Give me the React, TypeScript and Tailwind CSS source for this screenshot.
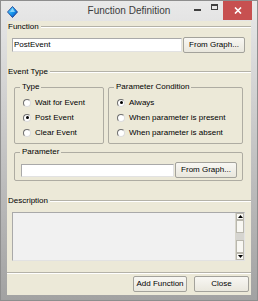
import React from 'react';

const font = "font-['Liberation_Sans',Arial,sans-serif]";

function Radio({ label, checked }: { label: string; checked?: boolean }) {
  return (
    <div className="flex items-center h-[15px] gap-[4px]">
      <span className="w-[8px] h-[8px] rounded-full bg-white border border-t-[#6f6f6f] border-l-[#6f6f6f] border-r-[#dcdcdc] border-b-[#dcdcdc] flex items-center justify-center shrink-0">
        {checked && <span className="w-[3px] h-[3px] rounded-full bg-black" />}
      </span>
      <span className="leading-none">{label}</span>
    </div>
  );
}

function Header({ label }: { label: string }) {
  return (
    <div className="flex items-center h-[12px] pl-[1px]">
      <span className="leading-none pr-[2px]">{label}</span>
      <div className="flex-1 border-t border-t-[#b4b2a8] border-b border-b-white" />
    </div>
  );
}

function Button({ label, className = '' }: { label: string; className?: string }) {
  return (
    <div
      className={`h-[16px] flex items-center justify-center rounded-[2px] border border-[#a3a29b] bg-gradient-to-b from-[#f8f7f3] to-[#e9e7dd] leading-none ${className}`}
    >
      {label}
    </div>
  );
}

export default function App() {
  return (
    <div className={`w-[258px] h-[301px] flex flex-col bg-gradient-to-b from-[#e9e9e9] via-[#c4c4c4] to-[#a2a2a2] border border-[#8e8e8e] text-[8px] text-black ${font}`}>
      {/* Title bar */}
      <div className="h-[20px] grid grid-cols-[1fr_auto_1fr] items-start shrink-0">
        <div className="pl-[6px] pt-[5px]">
          <svg width="11" height="12" viewBox="0 0 11 12">
            <defs>
              <linearGradient id="dia" x1="0" y1="0" x2="1" y2="1">
                <stop offset="0" stopColor="#7fe3ff" />
                <stop offset="0.5" stopColor="#1a9cf0" />
                <stop offset="1" stopColor="#0a3fb0" />
              </linearGradient>
            </defs>
            <polygon points="5.5,0.5 10.5,6 5.5,11.5 0.5,6" fill="url(#dia)" stroke="#0b2f8a" strokeWidth="0.8" />
            <polygon points="5.5,2 8,6 5.5,6 3,6" fill="#c8f4ff" opacity="0.6" />
          </svg>
        </div>
        <div className="text-[10px] text-[#3c3c3c] leading-none pt-[5px]">Function Definition</div>
        <div className="flex justify-end pr-[5px]">
          <div className="w-[18px] h-[19px] flex items-start justify-center pt-[8px]">
            <div className="w-[7px] h-[2px] bg-[#3f3f3f]" />
          </div>
          <div className="w-[17px] h-[19px] flex items-start justify-center pt-[3px]">
            <div className="w-[7px] h-[6px] border border-[#3f3f3f] border-t-2" />
          </div>
          <div className="w-[29px] h-[19px] bg-[#c75050] flex items-center justify-center">
            <svg width="8" height="7" viewBox="0 0 8 7">
              <path d="M1 0.5 L7 6.5 M7 0.5 L1 6.5" stroke="white" strokeWidth="1.6" />
            </svg>
          </div>
        </div>
      </div>

      {/* Client */}
      <div className="mx-[6px] mb-[5px] flex-1 bg-[#ece9d8] flex flex-col">
        <Header label="Function" />
        <div className="flex items-center mt-[4px] pl-[5px]">
          <div className="w-[170px] h-[14px] bg-white border border-t-[#a9a9a9] border-l-[#a9a9a9] border-r-[#e2e2e2] border-b-[#e2e2e2] flex items-center pl-[1px] leading-none">
            PostEvent
          </div>
          <Button label="From Graph..." className="ml-[1px] w-[62px]" />
        </div>

        <div className="mt-[13px]">
          <Header label="Event Type" />
        </div>

        <div className="flex gap-[4px] pl-[7px] mt-[4px]">
          <fieldset className="w-[90px] border border-[#aeaca2] rounded-[2px] pl-[5px] pb-[3px]">
            <legend className="px-[2px] leading-[10px]">Type</legend>
            <div className="pl-[3px] pt-[3px] flex flex-col">
              <Radio label="Wait for Event" />
              <Radio label="Post Event" checked />
              <Radio label="Clear Event" />
            </div>
          </fieldset>
          <fieldset className="w-[135px] border border-[#aeaca2] rounded-[2px] pl-[5px] pb-[3px]">
            <legend className="px-[2px] leading-[10px]">Parameter Condition</legend>
            <div className="pl-[3px] pt-[3px] flex flex-col">
              <Radio label="Always" checked />
              <Radio label="When parameter is present" />
              <Radio label="When parameter is absent" />
            </div>
          </fieldset>
        </div>

        <div className="pl-[7px] mt-[3px]">
          <fieldset className="w-[229px] border border-[#aeaca2] rounded-[2px] pl-[5px] pb-[2px]">
            <legend className="px-[2px] leading-[10px]">Parameter</legend>
            <div className="flex items-center pt-[5px] pl-[1px]">
              <div className="w-[153px] h-[13px] bg-white border border-t-[#a9a9a9] border-l-[#a9a9a9] border-r-[#e2e2e2] border-b-[#e2e2e2]" />
              <Button label="From Graph..." className="ml-[1px] w-[62px]" />
            </div>
          </fieldset>
        </div>

        <div className="mt-[14px]">
          <Header label="Description" />
        </div>

        <div className="ml-[5px] mt-[5px] w-[233px] h-[49px] bg-[#f1f1f1] border border-t-[#a9a9a9] border-l-[#a9a9a9] border-r-[#e2e2e2] border-b-[#e2e2e2] flex justify-end">
          <div className="w-[9px] h-full flex flex-col bg-[#f4f3ee] border-l border-[#d8d6cc]">
            <div className="h-[7px] border border-[#b9b7ad] bg-[#fbfaf6] flex items-center justify-center">
              <svg width="5" height="3" viewBox="0 0 5 3"><polygon points="2.5,0 5,3 0,3" fill="#000" /></svg>
            </div>
            <div className="h-[13px] border border-[#b9b7ad] bg-[#f8f7f2]" />
            <div className="h-[7px] bg-[#d6d5d0]" />
            <div className="flex-1 border border-[#b9b7ad] bg-[#f8f7f2]" />
            <div className="h-[7px] border border-[#b9b7ad] bg-[#fbfaf6] flex items-center justify-center">
              <svg width="5" height="3" viewBox="0 0 5 3"><polygon points="0,0 5,0 2.5,3" fill="#000" /></svg>
            </div>
          </div>
        </div>

        <div className="mt-[11px] border-t border-t-[#b4b2a8] border-b border-b-white" />

        <div className="flex justify-end gap-[7px] pr-[2px] mt-[2px]">
          <Button label="Add Function" className="w-[54px]" />
          <Button label="Close" className="w-[55px]" />
        </div>
      </div>
    </div>
  );
}
